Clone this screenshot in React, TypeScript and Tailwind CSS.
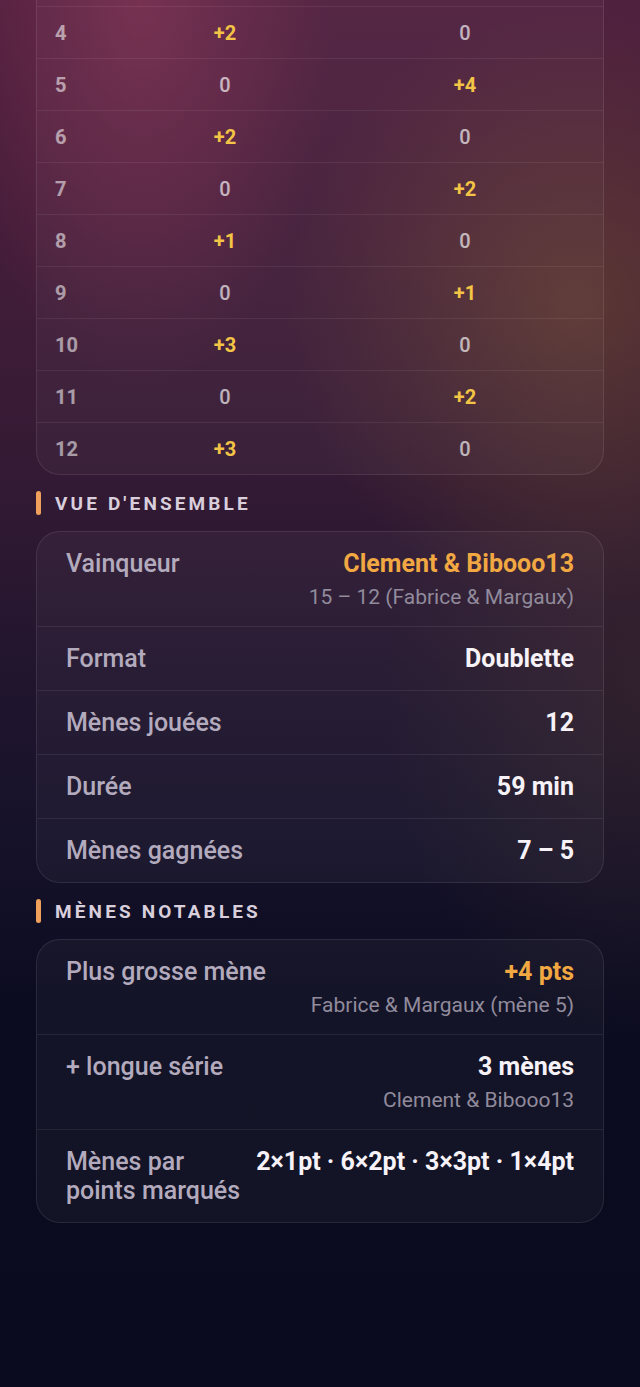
const ROWS = [
  { n: 4, a: "+2", b: "0" },
  { n: 5, a: "0", b: "+4" },
  { n: 6, a: "+2", b: "0" },
  { n: 7, a: "0", b: "+2" },
  { n: 8, a: "+1", b: "0" },
  { n: 9, a: "0", b: "+1" },
  { n: 10, a: "+3", b: "0" },
  { n: 11, a: "0", b: "+2" },
  { n: 12, a: "+3", b: "0" },
];

function Score({ v }: { v: string }) {
  const scored = v.startsWith("+");
  return (
    <span
      className={
        scored
          ? "text-[#f3c445] font-bold"
          : "text-white/65 font-medium"
      }
    >
      {v}
    </span>
  );
}

function SectionTitle({ children }: { children: React.ReactNode }) {
  return (
    <div className="flex items-center gap-[14px] h-[24px] mt-[16px] mb-[16px]">
      <span className="w-[5px] h-[24px] rounded-full bg-[#f0a05a]" />
      <h2 className="text-[19px] font-bold tracking-[0.165em] text-[#d9cfdc] leading-none">
        {children}
      </h2>
    </div>
  );
}

function StatRow({
  label,
  value,
  sub,
  accent,
  last,
}: {
  label: string;
  value: string;
  sub?: string;
  accent?: boolean;
  last?: boolean;
}) {
  return (
    <div
      className={`flex justify-between gap-4 px-[29px] py-[17px] ${
        last ? "" : "border-b border-white/[0.08]"
      }`}
    >
      <span className="text-[25px] leading-[29px] font-medium text-[#b3abbd]">
        {label}
      </span>
      <div className="flex flex-col items-end text-right shrink-0">
        <span
          className={`text-[25px] leading-[29px] font-bold whitespace-nowrap ${
            accent ? "text-[#f1a842]" : "text-[#f6f2f7]"
          }`}
        >
          {value}
        </span>
        {sub && (
          <span className="mt-[7px] text-[21px] leading-[24px] text-[#918b9c] whitespace-nowrap">
            {sub}
          </span>
        )}
      </div>
    </div>
  );
}

export default function App() {
  return (
    <div className="min-h-screen font-['Roboto',sans-serif] px-[36px] pb-[160px] bg-[#0a0b1e] bg-[radial-gradient(ellipse_30%_28%_at_22%_0%,rgba(150,55,90,0.5)_0%,transparent_100%),radial-gradient(ellipse_45%_22%_at_90%_22%,rgba(115,78,48,0.55)_0%,transparent_100%),radial-gradient(ellipse_40%_25%_at_100%_50%,rgba(80,55,45,0.35)_0%,transparent_100%),linear-gradient(180deg,#50203f_0%,#431d39_18%,#341a34_34%,#22152e_48%,#16122a_60%,#0c0c21_72%,#0a0b1e_100%)]">
      {/* Mènes table (scrolled) */}
      <div className="pt-[6px] border-x border-b border-white/[0.09] rounded-b-[24px] bg-white/[0.03]">
        {ROWS.map((r) => (
          <div
            key={r.n}
            className="grid grid-cols-[50px_1fr_1fr] items-center h-[52px] px-[18px] border-t border-white/[0.07] text-[20px]"
          >
            <span className="font-bold text-white/55">{r.n}</span>
            <span className="text-center">
              <Score v={r.a} />
            </span>
            <span className="text-center">
              <Score v={r.b} />
            </span>
          </div>
        ))}
      </div>

      <SectionTitle>VUE D'ENSEMBLE</SectionTitle>
      <div className="rounded-[24px] border border-white/[0.09] bg-white/[0.035]">
        <StatRow
          label="Vainqueur"
          value="Clement & Bibooo13"
          sub="15 – 12 (Fabrice & Margaux)"
          accent
        />
        <StatRow label="Format" value="Doublette" />
        <StatRow label="Mènes jouées" value="12" />
        <StatRow label="Durée" value="59 min" />
        <StatRow label="Mènes gagnées" value="7 – 5" last />
      </div>

      <SectionTitle>MÈNES NOTABLES</SectionTitle>
      <div className="rounded-[24px] border border-white/[0.09] bg-white/[0.035]">
        <StatRow
          label="Plus grosse mène"
          value="+4 pts"
          sub="Fabrice & Margaux (mène 5)"
          accent
        />
        <StatRow
          label="+ longue série"
          value="3 mènes"
          sub="Clement & Bibooo13"
        />
        <StatRow
          label="Mènes par points marqués"
          value="2×1pt · 6×2pt · 3×3pt · 1×4pt"
          last
        />
      </div>
    </div>
  );
}
